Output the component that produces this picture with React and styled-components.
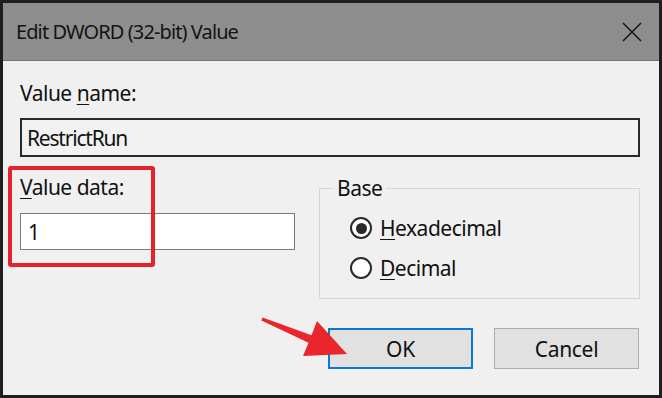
import React from "react";
import styled, { createGlobalStyle } from "styled-components";

const Global = createGlobalStyle`
  html, body { margin: 0; padding: 0; background: #1c1c1c; }
  * { box-sizing: border-box; }
`;

const Window = styled.div`
  width: 662px;
  height: 398px;
  border: 3px solid #1e1e1e;
  background: #f0f0f0;
  display: flex;
  flex-direction: column;
  font-family: "Segoe UI", "Noto Sans", "Liberation Sans", sans-serif;
  color: #111;
  letter-spacing: -0.5px;
`;

const TitleBar = styled.div`
  height: 58px;
  flex: none;
  background: #8e8e8e;
  border-bottom: 1px solid #777;
  display: flex;
  align-items: center;
  justify-content: space-between;
  padding: 0 17px 0 13px;
`;

const Title = styled.div`
  font-size: 20px;
  letter-spacing: -0.9px;
  color: #141414;
`;

const Body = styled.div`
  position: relative;
  flex: 1;
  padding: 0 19px 0 17px;
`;

const Label = styled.div`
  font-size: 21px;
  line-height: 26px;
  margin-top: ${(p) => p.$top || 0}px;
`;

const U = styled.span`
  text-decoration: underline;
  text-underline-offset: 3px;
  text-decoration-thickness: 1px;
`;

const Field = styled.div`
  height: ${(p) => p.$h}px;
  margin-top: ${(p) => p.$top}px;
  border: ${(p) => (p.$readonly ? "2px solid #2a2a2a" : "1px solid #7a7a7a")};
  background: ${(p) => (p.$readonly ? "#f2f2f2" : "#fff")};
  display: flex;
  align-items: center;
  padding-left: ${(p) => (p.$readonly ? 5 : 7)}px;
  font-size: 21px;
  letter-spacing: ${(p) => (p.$readonly ? "-1.2px" : "-0.5px")};
`;

const Row = styled.div`
  display: flex;
  margin-top: 17px;
  gap: 24px;
`;

const Column = styled.div`
  width: 275px;
`;

const Group = styled.fieldset`
  margin: 1px 0 0;
  flex: 1;
  height: 124px;
  border: 1px solid #d6d6d6;
  padding: 0 0 0 30px;
`;

const Legend = styled.legend`
  font-size: 21px;
  line-height: 26px;
  padding: 0 4px;
  margin-left: -17px;
`;

const RadioRow = styled.label`
  display: flex;
  align-items: center;
  gap: 8px;
  height: 30px;
  margin-top: ${(p) => p.$top}px;
  font-size: 21px;
`;

const Circle = styled.span`
  width: 22px;
  height: 22px;
  border-radius: 50%;
  border: 2px solid #2a2a2a;
  background: #fff;
  display: flex;
  align-items: center;
  justify-content: center;

  &::after {
    content: "";
    width: 11px;
    height: 11px;
    border-radius: 50%;
    background: ${(p) => (p.$checked ? "#2a2a2a" : "transparent")};
  }
`;

const Buttons = styled.div`
  display: flex;
  justify-content: flex-end;
  gap: 21px;
  margin-top: 29px;
  margin-right: 1px;
`;

const Button = styled.button`
  width: 145px;
  height: 41px;
  background: #e1e1e1;
  border: ${(p) => (p.$primary ? "2px solid #0a78d7" : "1px solid #adadad")};
  font-family: inherit;
  font-size: 21px;
  letter-spacing: -0.3px;
  color: #111;
  padding: 0;
`;

const Highlight = styled.div`
  position: absolute;
  left: 5px;
  top: 105px;
  width: 147px;
  height: 101px;
  border: 4px solid #e3222b;
  border-radius: 3px;
  pointer-events: none;
`;

const Arrow = styled.svg`
  position: absolute;
  left: 250px;
  top: 250px;
  pointer-events: none;
`;

export default function App() {
  return (
    <>
      <Global />
      <Window>
        <TitleBar>
          <Title>Edit DWORD (32-bit) Value</Title>
          <svg width="20" height="20" viewBox="0 0 20 20">
            <path d="M1 1 L19 19 M19 1 L1 19" stroke="#1a1a1a" strokeWidth="1.6" />
          </svg>
        </TitleBar>
        <Body>
          <Label $top={19}>
            Value <U>n</U>ame:
          </Label>
          <Field $readonly $h={39} $top={12}>
            RestrictRun
          </Field>
          <Row>
            <Column>
              <Label>
                <U>V</U>alue data:
              </Label>
              <Field $h={37} $top={13}>
                1
              </Field>
            </Column>
            <Group>
              <Legend>Base</Legend>
              <RadioRow $top={12}>
                <Circle $checked />
                <span>
                  <U>H</U>exadecimal
                </span>
              </RadioRow>
              <RadioRow $top={10}>
                <Circle />
                <span>
                  <U>D</U>ecimal
                </span>
              </RadioRow>
            </Group>
          </Row>
          <Buttons>
            <Button $primary>OK</Button>
            <Button>Cancel</Button>
          </Buttons>
          <Highlight />
          <Arrow width="100" height="50" viewBox="0 0 100 50">
            <polygon
              points="9.6,6.6 58.5,24.3 64,10 94,43 50,45 55.5,31.7 8.4,9.4"
              fill="#e8262b"
            />
          </Arrow>
        </Body>
      </Window>
    </>
  );
}
